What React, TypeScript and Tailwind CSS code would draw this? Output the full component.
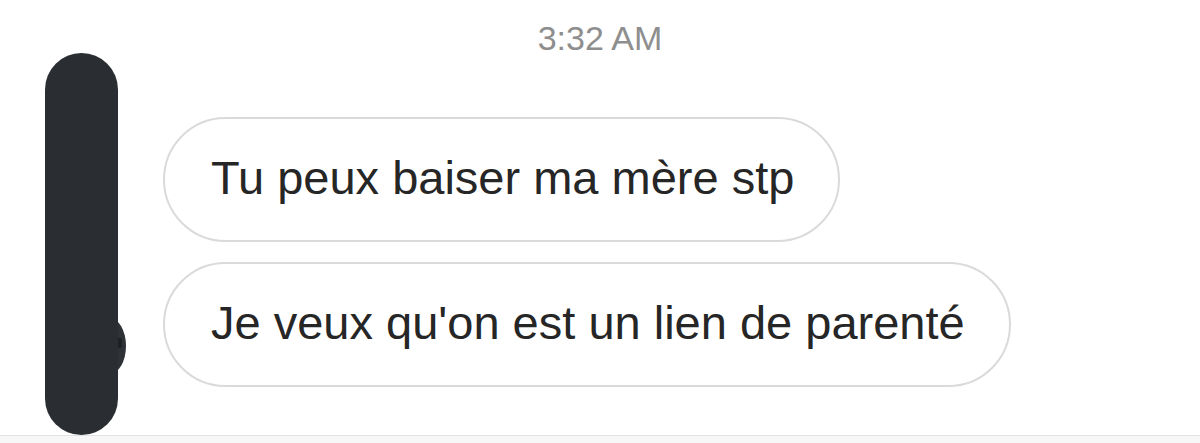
import React from "react";

const font = { fontFamily: '"Liberation Sans", Arial, sans-serif' };

const Bubble = ({ children }: { children: React.ReactNode }) => (
  <div className="inline-flex h-[125px] items-center self-start rounded-full border-2 border-[#dadada] bg-white pl-[46px] pr-[44px] pb-[4px] text-[47px] leading-none text-[#262626]">
    {children}
  </div>
);

export default function App() {
  return (
    <div className="flex h-[443px] w-[1200px] flex-col overflow-hidden bg-white" style={font}>
      <div className="relative flex flex-1 flex-col">
        {/* timestamp */}
        <div className="pt-[21px] text-center text-[34px] leading-none text-[#8e8e8e]">3:32 AM</div>

        <div className="mt-[-2px] flex flex-1 pl-[45px]">
          {/* avatar covered by a dark marker stroke */}
          <div className="relative w-[73px]">
            <div className="absolute left-[48px] top-[265px] h-[56px] w-[33px] rounded-[50%] bg-[#2e3237]">
              <div className="absolute right-[4px] top-[20px] h-[10px] w-[5px] rounded-full bg-[#1d2024]" />
            </div>
            <div className="relative h-[382px] w-[73px] rounded-full bg-[#2a2e33]" />
          </div>

          <div className="ml-[45px] flex flex-col gap-[20px] pt-[64px]">
            <Bubble>Tu peux baiser ma mère stp</Bubble>
            <Bubble>Je veux qu'on est un lien de parenté</Bubble>
          </div>
        </div>
      </div>
      <div className="h-[8px] border-t border-[#e3e3e3] bg-[#f7f7f7]" />
    </div>
  );
}
